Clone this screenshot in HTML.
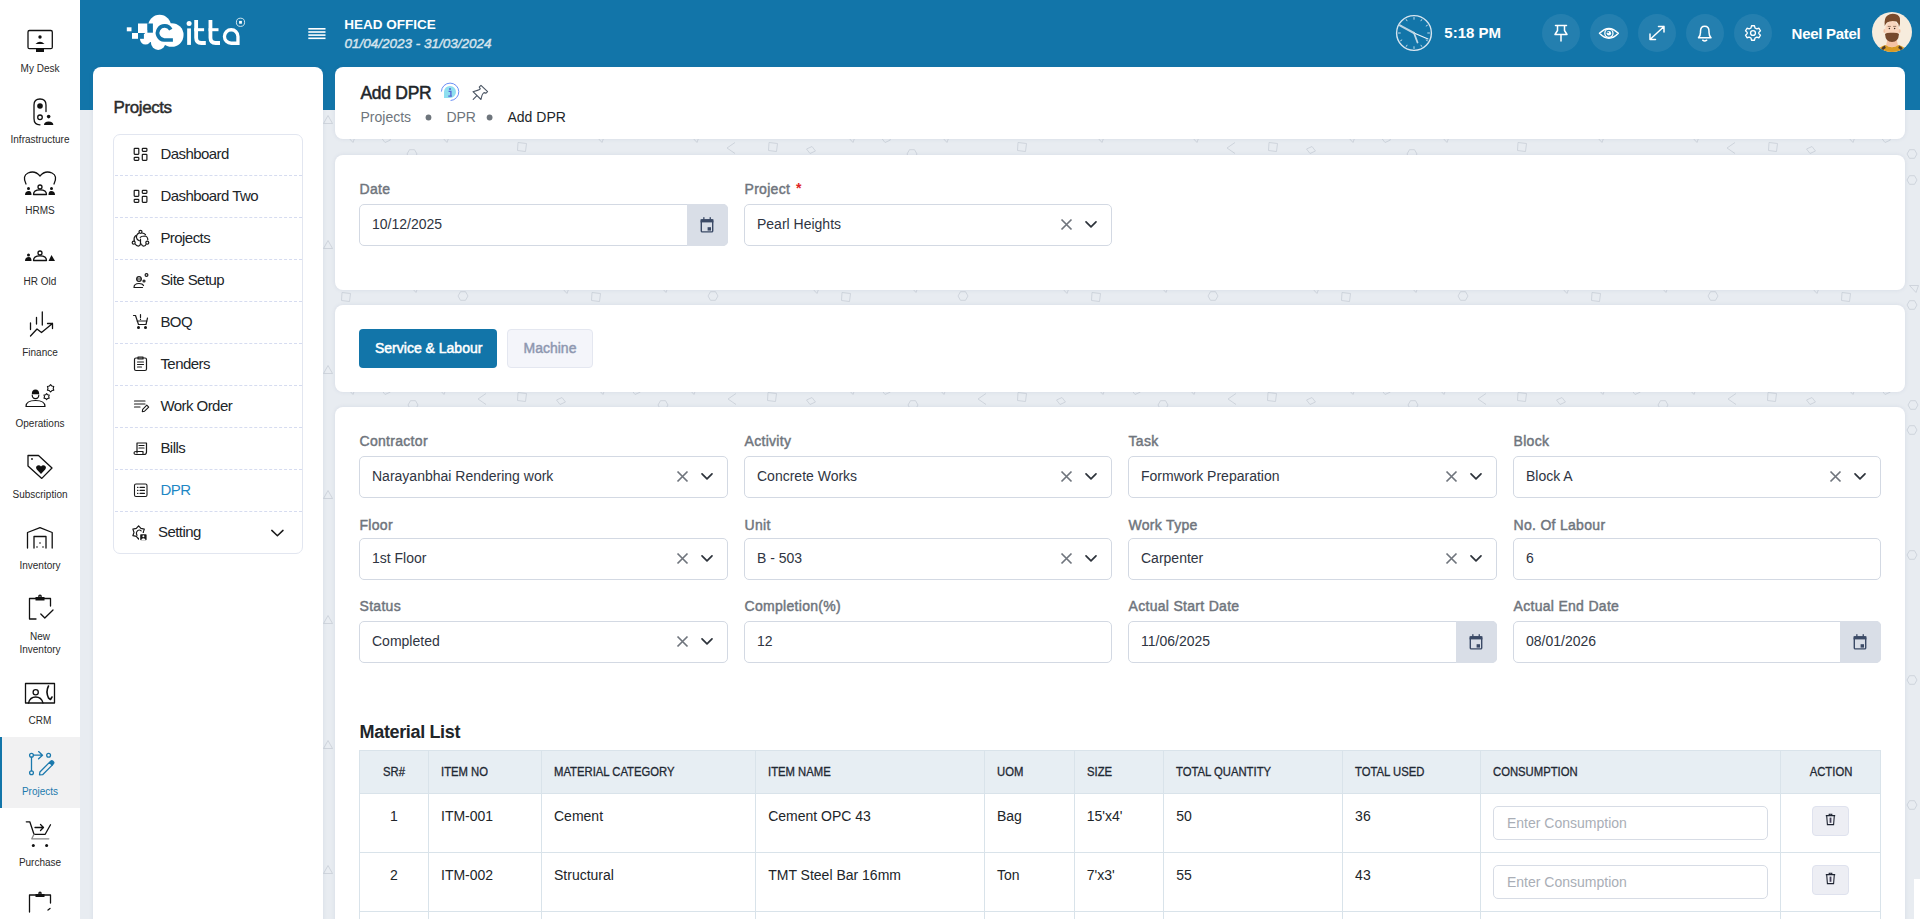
<!DOCTYPE html>
<html><head><meta charset="utf-8">
<style>
*{box-sizing:border-box;margin:0;padding:0}
html,body{width:1920px;height:919px;overflow:hidden}
body{font-family:"Liberation Sans",sans-serif;background:#e8ecf1;position:relative;color:#212529}
.abs{position:absolute}
.t{position:absolute;white-space:nowrap;line-height:1}
.card{position:absolute;background:#fff;border-radius:8px;box-shadow:0 0 4px rgba(60,80,130,0.10)}
svg{position:absolute;overflow:visible}
.inp{position:absolute;background:#fff;border:1px solid #d3d9e3;border-radius:5px}
.cal{position:absolute;background:#d9dee7;border-radius:0 5px 5px 0}
.hc{position:absolute;width:38px;height:38px;border-radius:50%;background:rgba(255,255,255,0.08)}
</style></head><body>
<div class="abs" style="left:0;top:0;width:80px;height:919px;background:#fff"></div>
<div class="abs" style="left:80px;top:0;width:1840px;height:110px;background:#1275a9"></div>
<div class="abs" style="left:0;top:737px;width:80px;height:71px;background:#f1f1f2"></div>
<div class="abs" style="left:0;top:737px;width:2px;height:71px;background:#1275a9"></div>
<svg style="left:0;top:0" width="80" height="919" fill="none" stroke="#111" stroke-width="1.3" stroke-linecap="round" stroke-linejoin="round">
<!-- my desk -->
<rect x="28" y="30.5" width="24.3" height="18.2" rx="1.5"/>
<rect x="36" y="49" width="8" height="3" fill="#111" stroke="none"/>
<circle cx="40" cy="37" r="1.7" fill="#111" stroke="none"/>
<path d="M35.5 44 Q40 39.5 44.5 44 Z" fill="#111" stroke="none"/>
<!-- infrastructure -->
<path d="M40 124.8 Q34 124.8 34 118.5 V105 Q34 99 40 99 Q46 99 46 105 V111.6"/>
<circle cx="40" cy="106" r="2.8" fill="#111" stroke="none"/>
<circle cx="40" cy="117.3" r="2.3"/>
<circle cx="48.65" cy="116.6" r="1.8" fill="#111" stroke="none"/>
<path d="M44 125 Q44 121.4 48.65 121.4 Q53.3 121.4 53.3 125 Z" fill="#111" stroke="none"/>
<!-- HRMS -->
<path d="M26 184 Q22 176 28 173 Q35 170 40 176 Q45 170 52 173 Q58 176 54 184"/>
<circle cx="40" cy="187" r="2"/>
<path d="M33.5 194.5 Q33.5 189.8 40 189.8 Q46.5 189.8 46.5 194.5 Z"/>
<circle cx="28.5" cy="188.5" r="1.5" fill="#111" stroke="none"/>
<path d="M25 195 Q25 191 29 191 Q31.5 191 31.5 195 Z" fill="#111" stroke="none"/>
<circle cx="51.5" cy="188.5" r="1.5" fill="#111" stroke="none"/>
<path d="M48.5 195 Q48.5 191 51 191 Q55 191 55 195 Z" fill="#111" stroke="none"/>
<!-- HR old -->
<circle cx="40" cy="253" r="2"/>
<path d="M33.5 260.5 Q33.5 255.8 40 255.8 Q46.5 255.8 46.5 260.5 Z"/>
<circle cx="28.5" cy="255" r="1.5" fill="#111" stroke="none"/>
<path d="M25 261 Q25 257 29 257 Q31.5 257 31.5 261 Z" fill="#111" stroke="none"/>
<path d="M48.5 261 L51.5 255 L55 261 Z" fill="#111" stroke="none"/>
<!-- finance -->
<path d="M30.5 323 V329.5 M36.5 317.5 V324 M42.3 312 V325"/>
<path d="M30.5 336 L37 329 L41.5 332.5 L52.5 323.5 M47.5 323.5 H52.5 V328.5"/>
<!-- operations -->
<path d="M26 406.5 Q26 400.5 35.5 400.5 Q45 400.5 45 406.5 Z" stroke-width="1.2"/>
<path d="M31.8 394.2 Q31.8 389.6 35.5 389.6 Q39.2 389.6 39.2 394.2 Z" fill="#111" stroke="none"/>
<path d="M32.2 395 Q32.2 398.6 35.5 398.6 Q38.8 398.6 38.8 395" stroke-width="1.1"/>
<path d="M50.60 384.60 L51.90 386.05 L53.80 386.45 L53.20 388.30 L53.80 390.15 L51.90 390.55 L50.60 392.00 L49.30 390.55 L47.40 390.15 L48.00 388.30 L47.40 386.45 L49.30 386.05 Z" stroke-width="1.1"/>
<path d="M46.60 393.60 L47.65 394.78 L49.20 395.10 L48.70 396.60 L49.20 398.10 L47.65 398.42 L46.60 399.60 L45.55 398.42 L44.00 398.10 L44.50 396.60 L44.00 395.10 L45.55 394.78 Z" stroke-width="1.1"/>
<!-- subscription -->
<path d="M28 455.5 H38.5 L52 468 L41.8 478.4 L28 466 Z"/>
<circle cx="32" cy="459" r="0.9" fill="#111" stroke="none"/>
<path d="M41 474 L36.8 469.5 Q35 467 37.5 465.5 Q39.5 464.5 41 466.5 Q42.5 464.5 44.5 465.5 Q47 467 45.2 469.5 Z" fill="#111" stroke="none"/>
<!-- inventory -->
<path d="M27.5 548 V532.5 L40 527.6 L52.2 532.5 V548 M34 548 V536.5 H46 V548"/>
<circle cx="40" cy="543" r="0.8" fill="#111" stroke="none"/>
<circle cx="37" cy="547" r="0.8" fill="#111" stroke="none"/>
<circle cx="43" cy="547" r="0.8" fill="#111" stroke="none"/>
<!-- new inventory -->
<path d="M36 598.5 H29.5 V619 H36 M44 598.5 H50.5 V606"/>
<rect x="35.5" y="597" width="9" height="3.5" fill="#111" stroke="none"/>
<circle cx="40" cy="596.3" r="1.2"/>
<path d="M40.8 614 L44.8 618 L53 610"/>
<!-- CRM -->
<path d="M25.5 703 V683.5 H54.5 V703 H25.5"/>
<circle cx="35.7" cy="692.3" r="2.6"/>
<path d="M28.5 703 Q30 697 35.7 697 Q41.4 697 43 703"/>
<path d="M48.5 686 Q45.5 691.5 48.5 698 L50.5 699.5 L52 697" stroke-width="1.6"/>
<!-- purchase -->
<path d="M26.3 821.8 H29.8 L34 834.3 H45.2 L50.5 824.8"/>
<path d="M34 834.3 L31.8 838.8 H48.8" stroke="#888"/>
<circle cx="33.3" cy="845.5" r="1.5" fill="#111" stroke="none"/>
<circle cx="46.6" cy="845.5" r="1.5" fill="#111" stroke="none"/>
<path d="M35 827.5 H43.5 M40.5 824.5 L43.5 827.5 L40.5 830.5"/>
<!-- next clipboard -->
<path d="M36 895 H29.5 V912 M44 895 H50.5 V903 M48 910 L50 908.5"/>
<rect x="35.5" y="894" width="9" height="3" fill="#111" stroke="none"/>
<circle cx="40" cy="893.3" r="1.1"/>
</svg>
<svg style="left:0;top:0" width="80" height="919" fill="none" stroke="#1b79ad" stroke-width="1.3" stroke-linecap="round" stroke-linejoin="round">
<circle cx="31.5" cy="755.2" r="1.9"/><circle cx="31.5" cy="772.7" r="1.9"/><circle cx="48.6" cy="755.2" r="1.9"/>
<path d="M31.5 757.1 V770.8 M33.4 755.2 H42.5 M38.6 751.6 L42.5 755.2 L38.6 758.8"/>
<path d="M39.5 774.8 L39.9 772 L49.5 762.4 L52.2 765.1 L42.6 774.7 Z"/>
<path d="M49.5 762.4 L51 761 Q51.8 760.3 52.6 761 L53.5 762 Q54.2 762.8 53.5 763.6 L52.2 765.1 Z" fill="#1b79ad"/>
</svg>
<div class="t" style="left:-60px;width:200px;text-align:center;top:63.53px;font-size:10px;color:#2a2a2a;">My Desk</div>
<div class="t" style="left:-60px;width:200px;text-align:center;top:134.53px;font-size:10px;color:#2a2a2a;">Infrastructure</div>
<div class="t" style="left:-60px;width:200px;text-align:center;top:205.53px;font-size:10px;color:#2a2a2a;">HRMS</div>
<div class="t" style="left:-60px;width:200px;text-align:center;top:276.54px;font-size:10px;color:#2a2a2a;">HR Old</div>
<div class="t" style="left:-60px;width:200px;text-align:center;top:347.54px;font-size:10px;color:#2a2a2a;">Finance</div>
<div class="t" style="left:-60px;width:200px;text-align:center;top:418.54px;font-size:10px;color:#2a2a2a;">Operations</div>
<div class="t" style="left:-60px;width:200px;text-align:center;top:489.54px;font-size:10px;color:#2a2a2a;">Subscription</div>
<div class="t" style="left:-60px;width:200px;text-align:center;top:560.53px;font-size:10px;color:#2a2a2a;">Inventory</div>
<div class="t" style="left:-60px;width:200px;text-align:center;top:631.53px;font-size:10px;color:#2a2a2a;">New</div>
<div class="t" style="left:-60px;width:200px;text-align:center;top:644.53px;font-size:10px;color:#2a2a2a;">Inventory</div>
<div class="t" style="left:-60px;width:200px;text-align:center;top:716.03px;font-size:10px;color:#2a2a2a;">CRM</div>
<div class="t" style="left:-60px;width:200px;text-align:center;top:858.03px;font-size:10px;color:#2a2a2a;">Purchase</div>
<div class="t" style="left:-60px;width:200px;text-align:center;top:787.33px;font-size:10px;color:#1b79ad;">Projects</div>
<svg style="left:0;top:0" width="1920" height="919" fill="none" stroke="#c8ced7" stroke-width="0.8"><path d="M346.5 135.5 L355.5 135.5 L353 142.5 Z"/><path d="M381.5 138 L387 135.5 L390.5 140 L385 142.5 Z"/><path d="M407 154 L409.5 149.7 H414.5 L417 154 L414.5 158.3 H409.5 Z"/><path d="M440.5 135.5 L449.5 135.5 L447 142.5 Z"/><path d="M518 142.5 L526.5 143.5 L525.5 151.5 L517.5 150.5 Z"/><path d="M595.5 135.5 L604.5 135.5 L602 142.5 Z"/><path d="M690.5 135.5 L699.5 135.5 L697 142.5 Z"/><path d="M735 142.5 L727 148 L735 153.5"/><path d="M769 142.5 L777.5 143.5 L776.5 151.5 L768.5 150.5 Z"/><path d="M806.5 149 L812 146.5 L815.5 151 L810 153.5 Z"/><path d="M846.5 135.5 L855.5 135.5 L853 142.5 Z"/><path d="M881.5 138 L887 135.5 L890.5 140 L885 142.5 Z"/><path d="M907 154 L909.5 149.7 H914.5 L917 154 L914.5 158.3 H909.5 Z"/><path d="M940.5 135.5 L949.5 135.5 L947 142.5 Z"/><path d="M1018 142.5 L1026.5 143.5 L1025.5 151.5 L1017.5 150.5 Z"/><path d="M1095.5 135.5 L1104.5 135.5 L1102 142.5 Z"/><path d="M1190.5 135.5 L1199.5 135.5 L1197 142.5 Z"/><path d="M1235 142.5 L1227 148 L1235 153.5"/><path d="M1269 142.5 L1277.5 143.5 L1276.5 151.5 L1268.5 150.5 Z"/><path d="M1306.5 149 L1312 146.5 L1315.5 151 L1310 153.5 Z"/><path d="M1346.5 135.5 L1355.5 135.5 L1353 142.5 Z"/><path d="M1381.5 138 L1387 135.5 L1390.5 140 L1385 142.5 Z"/><path d="M1407 154 L1409.5 149.7 H1414.5 L1417 154 L1414.5 158.3 H1409.5 Z"/><path d="M1440.5 135.5 L1449.5 135.5 L1447 142.5 Z"/><path d="M1518 142.5 L1526.5 143.5 L1525.5 151.5 L1517.5 150.5 Z"/><path d="M1595.5 135.5 L1604.5 135.5 L1602 142.5 Z"/><path d="M1690.5 135.5 L1699.5 135.5 L1697 142.5 Z"/><path d="M1735 142.5 L1727 148 L1735 153.5"/><path d="M1769 142.5 L1777.5 143.5 L1776.5 151.5 L1768.5 150.5 Z"/><path d="M1806.5 149 L1812 146.5 L1815.5 151 L1810 153.5 Z"/><path d="M1846.5 135.5 L1855.5 135.5 L1853 142.5 Z"/><path d="M1881.5 138 L1887 135.5 L1890.5 140 L1885 142.5 Z"/><path d="M1907 154 L1909.5 149.7 H1914.5 L1917 154 L1914.5 158.3 H1909.5 Z"/><path d="M1940.5 135.5 L1949.5 135.5 L1947 142.5 Z"/><path d="M2018 142.5 L2026.5 143.5 L2025.5 151.5 L2017.5 150.5 Z"/><path d="M2095.5 135.5 L2104.5 135.5 L2102 142.5 Z"/><path d="M2190.5 135.5 L2199.5 135.5 L2197 142.5 Z"/><path d="M2235 142.5 L2227 148 L2235 153.5"/><path d="M2269 142.5 L2277.5 143.5 L2276.5 151.5 L2268.5 150.5 Z"/><path d="M2306.5 149 L2312 146.5 L2315.5 151 L2310 153.5 Z"/><path d="M342 292.5 L350.5 293.5 L349.5 301.5 L341.5 300.5 Z"/><path d="M409.5 285.5 L418.5 285.5 L416 292.5 Z"/><path d="M458 296 L460.5 291.7 H465.5 L468 296 L465.5 300.3 H460.5 Z"/><path d="M560.5 286.5 L569.5 286.5 L567 293.5 Z"/><path d="M592 292.5 L600.5 293.5 L599.5 301.5 L591.5 300.5 Z"/><path d="M659.5 285.5 L668.5 285.5 L666 292.5 Z"/><path d="M708 296 L710.5 291.7 H715.5 L718 296 L715.5 300.3 H710.5 Z"/><path d="M810.5 286.5 L819.5 286.5 L817 293.5 Z"/><path d="M842 292.5 L850.5 293.5 L849.5 301.5 L841.5 300.5 Z"/><path d="M909.5 285.5 L918.5 285.5 L916 292.5 Z"/><path d="M958 296 L960.5 291.7 H965.5 L968 296 L965.5 300.3 H960.5 Z"/><path d="M1060.5 286.5 L1069.5 286.5 L1067 293.5 Z"/><path d="M1092 292.5 L1100.5 293.5 L1099.5 301.5 L1091.5 300.5 Z"/><path d="M1159.5 285.5 L1168.5 285.5 L1166 292.5 Z"/><path d="M1208 296 L1210.5 291.7 H1215.5 L1218 296 L1215.5 300.3 H1210.5 Z"/><path d="M1310.5 286.5 L1319.5 286.5 L1317 293.5 Z"/><path d="M1342 292.5 L1350.5 293.5 L1349.5 301.5 L1341.5 300.5 Z"/><path d="M1409.5 285.5 L1418.5 285.5 L1416 292.5 Z"/><path d="M1458 296 L1460.5 291.7 H1465.5 L1468 296 L1465.5 300.3 H1460.5 Z"/><path d="M1560.5 286.5 L1569.5 286.5 L1567 293.5 Z"/><path d="M1592 292.5 L1600.5 293.5 L1599.5 301.5 L1591.5 300.5 Z"/><path d="M1659.5 285.5 L1668.5 285.5 L1666 292.5 Z"/><path d="M1708 296 L1710.5 291.7 H1715.5 L1718 296 L1715.5 300.3 H1710.5 Z"/><path d="M1810.5 286.5 L1819.5 286.5 L1817 293.5 Z"/><path d="M1842 292.5 L1850.5 293.5 L1849.5 301.5 L1841.5 300.5 Z"/><path d="M1909.5 285.5 L1918.5 285.5 L1916 292.5 Z"/><path d="M1958 296 L1960.5 291.7 H1965.5 L1968 296 L1965.5 300.3 H1960.5 Z"/><path d="M2060.5 286.5 L2069.5 286.5 L2067 293.5 Z"/><path d="M346.5 387.5 L355.5 387.5 L353 394.5 Z"/><path d="M381.5 390 L387 387.5 L390.5 392 L385 394.5 Z"/><path d="M408 405 L410.5 400.7 H415.5 L418 405 L415.5 409.3 H410.5 Z"/><path d="M437.5 387.5 L446.5 387.5 L444 394.5 Z"/><path d="M486 393.5 L478 399 L486 404.5"/><path d="M518 392.5 L526.5 393.5 L525.5 401.5 L517.5 400.5 Z"/><path d="M556.5 400 L562 397.5 L565.5 402 L560 404.5 Z"/><path d="M596.5 387.5 L605.5 387.5 L603 394.5 Z"/><path d="M631.5 390 L637 387.5 L640.5 392 L635 394.5 Z"/><path d="M658 405 L660.5 400.7 H665.5 L668 405 L665.5 409.3 H660.5 Z"/><path d="M687.5 387.5 L696.5 387.5 L694 394.5 Z"/><path d="M736 393.5 L728 399 L736 404.5"/><path d="M768 392.5 L776.5 393.5 L775.5 401.5 L767.5 400.5 Z"/><path d="M806.5 400 L812 397.5 L815.5 402 L810 404.5 Z"/><path d="M846.5 387.5 L855.5 387.5 L853 394.5 Z"/><path d="M881.5 390 L887 387.5 L890.5 392 L885 394.5 Z"/><path d="M908 405 L910.5 400.7 H915.5 L918 405 L915.5 409.3 H910.5 Z"/><path d="M937.5 387.5 L946.5 387.5 L944 394.5 Z"/><path d="M986 393.5 L978 399 L986 404.5"/><path d="M1018 392.5 L1026.5 393.5 L1025.5 401.5 L1017.5 400.5 Z"/><path d="M1056.5 400 L1062 397.5 L1065.5 402 L1060 404.5 Z"/><path d="M1096.5 387.5 L1105.5 387.5 L1103 394.5 Z"/><path d="M1131.5 390 L1137 387.5 L1140.5 392 L1135 394.5 Z"/><path d="M1158 405 L1160.5 400.7 H1165.5 L1168 405 L1165.5 409.3 H1160.5 Z"/><path d="M1187.5 387.5 L1196.5 387.5 L1194 394.5 Z"/><path d="M1236 393.5 L1228 399 L1236 404.5"/><path d="M1268 392.5 L1276.5 393.5 L1275.5 401.5 L1267.5 400.5 Z"/><path d="M1306.5 400 L1312 397.5 L1315.5 402 L1310 404.5 Z"/><path d="M1346.5 387.5 L1355.5 387.5 L1353 394.5 Z"/><path d="M1381.5 390 L1387 387.5 L1390.5 392 L1385 394.5 Z"/><path d="M1408 405 L1410.5 400.7 H1415.5 L1418 405 L1415.5 409.3 H1410.5 Z"/><path d="M1437.5 387.5 L1446.5 387.5 L1444 394.5 Z"/><path d="M1486 393.5 L1478 399 L1486 404.5"/><path d="M1518 392.5 L1526.5 393.5 L1525.5 401.5 L1517.5 400.5 Z"/><path d="M1556.5 400 L1562 397.5 L1565.5 402 L1560 404.5 Z"/><path d="M1596.5 387.5 L1605.5 387.5 L1603 394.5 Z"/><path d="M1631.5 390 L1637 387.5 L1640.5 392 L1635 394.5 Z"/><path d="M1658 405 L1660.5 400.7 H1665.5 L1668 405 L1665.5 409.3 H1660.5 Z"/><path d="M1687.5 387.5 L1696.5 387.5 L1694 394.5 Z"/><path d="M1736 393.5 L1728 399 L1736 404.5"/><path d="M1768 392.5 L1776.5 393.5 L1775.5 401.5 L1767.5 400.5 Z"/><path d="M1806.5 400 L1812 397.5 L1815.5 402 L1810 404.5 Z"/><path d="M1846.5 387.5 L1855.5 387.5 L1853 394.5 Z"/><path d="M1881.5 390 L1887 387.5 L1890.5 392 L1885 394.5 Z"/><path d="M1908 405 L1910.5 400.7 H1915.5 L1918 405 L1915.5 409.3 H1910.5 Z"/><path d="M1937.5 387.5 L1946.5 387.5 L1944 394.5 Z"/><path d="M1986 393.5 L1978 399 L1986 404.5"/><path d="M2018 392.5 L2026.5 393.5 L2025.5 401.5 L2017.5 400.5 Z"/><path d="M2056.5 400 L2062 397.5 L2065.5 402 L2060 404.5 Z"/><path d="M323.5 123.5 L328 115.5 L332.5 123.5 Z"/><path d="M1907 180 L1909.5 175.7 H1914.5 L1917 180 L1914.5 184.3 H1909.5 Z"/><path d="M323.5 248.5 L328 240.5 L332.5 248.5 Z"/><path d="M1907 305 L1909.5 300.7 H1914.5 L1917 305 L1914.5 309.3 H1909.5 Z"/><path d="M323.5 373.5 L328 365.5 L332.5 373.5 Z"/><path d="M1907 430 L1909.5 425.7 H1914.5 L1917 430 L1914.5 434.3 H1909.5 Z"/><path d="M323.5 498.5 L328 490.5 L332.5 498.5 Z"/><path d="M1907 555 L1909.5 550.7 H1914.5 L1917 555 L1914.5 559.3 H1909.5 Z"/><path d="M323.5 623.5 L328 615.5 L332.5 623.5 Z"/><path d="M1907 680 L1909.5 675.7 H1914.5 L1917 680 L1914.5 684.3 H1909.5 Z"/><path d="M323.5 748.5 L328 740.5 L332.5 748.5 Z"/><path d="M1907 805 L1909.5 800.7 H1914.5 L1917 805 L1914.5 809.3 H1909.5 Z"/><path d="M323.5 873.5 L328 865.5 L332.5 873.5 Z"/><path d="M1907 930 L1909.5 925.7 H1914.5 L1917 930 L1914.5 934.3 H1909.5 Z"/></svg>
<div class="card" style="left:93px;top:67px;width:230px;height:900px"></div>
<div class="card" style="left:335px;top:67px;width:1570px;height:72px"></div>
<div class="card" style="left:335px;top:155px;width:1570px;height:135px"></div>
<div class="card" style="left:335px;top:305px;width:1570px;height:87px"></div>
<div class="card" style="left:335px;top:407px;width:1570px;height:600px"></div>
<svg style="left:0;top:0" width="1920" height="110">
<g fill="#fff">
<rect x="126.8" y="27.3" width="4.7" height="4"/>
<rect x="132" y="33" width="6" height="5.8"/>
<rect x="138" y="23.5" width="9.6" height="9.5"/>
<circle cx="159.6" cy="26.3" r="11.5"/>
<circle cx="171.7" cy="35" r="11.85"/>
<circle cx="158.2" cy="42.6" r="7.3"/>
<circle cx="145.5" cy="39" r="5.5"/>
<rect x="145" y="30" width="20" height="12"/>
</g>
<g fill="#1275a9">
<rect x="147.4" y="23.5" width="5.5" height="9.2"/>
<rect x="138" y="33" width="5.9" height="5.8"/>
</g>
<path d="M170.8 29.6 A7.05 7.05 0 1 0 164.2 40 H172.9" fill="none" stroke="#1275a9" stroke-width="3.7"/>
<g fill="none" stroke="#fff">
<circle cx="189.1" cy="23.4" r="2.5" fill="#fff" stroke="none"/>
<path d="M189.05 28.4 V44.9" stroke-width="3.8"/>
<path d="M196.15 19.9 V37.8 Q196.15 43 201.3 43 H205.8" stroke-width="3.8"/>
<path d="M194.3 29.7 H204.1" stroke-width="3"/>
<path d="M210.45 19.9 V37.8 Q210.45 43 215.6 43 H220" stroke-width="3.8"/>
<path d="M208.6 29.7 H218.5" stroke-width="3"/>
<path d="M231.2 43.25 A6.75 6.75 0 1 1 237.95 36.5 V43.25 Z" stroke-width="3.3"/>
<circle cx="240.5" cy="22.3" r="4.1" stroke-width="0.8"/>
<rect x="239.1" y="20.9" width="2.8" height="2.8" fill="#fff" stroke="none"/>
</g>
<g fill="#fff">
<rect x="308.3" y="28" width="17.2" height="1.6"/>
<rect x="308.3" y="31.2" width="17.2" height="1.6"/>
<rect x="308.3" y="34.3" width="17.2" height="1.6"/>
<rect x="308.3" y="37.5" width="17.2" height="1.6"/>
</g>
<g fill="none" stroke="#d5e4ef" stroke-linecap="round">
<circle cx="1414" cy="33" r="17.4" stroke-width="1.4"/>
<path d="M1414 17.5 V19.3 M1414 46.7 V48.5 M1398.5 33 H1400.3 M1427.7 33 H1429.5 M1421.7 19.6 L1421 20.8 M1427.4 25.3 L1426.2 26 M1427.4 40.7 L1426.2 40 M1421.7 46.4 L1421 45.2 M1406.3 46.4 L1407 45.2 M1400.6 40.7 L1401.8 40 M1400.6 25.3 L1401.8 26 M1406.3 19.6 L1407 20.8" stroke-width="0.9"/>
<path d="M1414 33 L1399.8 25.3" stroke-width="2" stroke="#b9d3e3"/>
<path d="M1414 33 L1428 38.9" stroke-width="1.1" stroke="#eef5f9"/>
<path d="M1414 33 L1417.5 42.5" stroke-width="1.8" stroke="#c0d8e7"/>
</g>
</svg>
<div class="t" style="left:344.3px;top:18.17px;font-size:13.5px;font-weight:bold;color:#fff;">HEAD OFFICE</div>
<div class="t" style="left:344.5px;top:36.87px;font-size:13.5px;color:#d6e4ed;font-style:italic;-webkit-text-stroke:0.45px #d6e4ed;">01/04/2023 - 31/03/2024</div>
<div class="t" style="left:1444.3px;top:25.20px;font-size:15px;font-weight:bold;color:#fff;">5:18 PM</div>
<div class="t" style="left:1791.6px;top:26.30px;font-size:15px;font-weight:bold;color:#fff;letter-spacing:-0.3px;">Neel Patel</div>
<div class="hc" style="left:1542px;top:14px"></div>
<div class="hc" style="left:1590px;top:14px"></div>
<div class="hc" style="left:1638px;top:14px"></div>
<div class="hc" style="left:1686px;top:14px"></div>
<div class="hc" style="left:1734px;top:14px"></div>
<svg style="left:0;top:0" width="1920" height="110" fill="none" stroke="#fff" stroke-width="1.5" stroke-linecap="round" stroke-linejoin="round">
<path d="M1555.5 25.5 H1566.5 M1557.5 25.5 V30.5 L1555 34.5 H1567 L1564.5 30.5 V25.5 M1561 34.5 V41"/>
<path d="M1599.5 33.3 Q1608.9 23.5 1618.3 33.3 Q1608.9 43.2 1599.5 33.3 Z"/>
<circle cx="1608.9" cy="33.3" r="4.1" stroke-width="1.3"/>
<circle cx="1608.9" cy="33.3" r="2.2" fill="#fff" stroke="none"/>
<circle cx="1608.1" cy="32.5" r="0.8" fill="#1275a9" stroke="none"/>
<path d="M1650 39.5 L1664 26.5 M1658.5 26.5 H1664 V32 M1650 34 V39.5 H1655.5"/>
<path d="M1698.5 37.8 H1711 Q1709 35.5 1709 32.5 V31.3 Q1709 26.3 1704.7 26.3 Q1700.5 26.3 1700.5 31.3 V32.5 Q1700.5 35.5 1698.5 37.8 Z M1702.7 40.2 Q1704.7 41.8 1706.7 40.2"/>
<g transform="translate(1753 33) scale(0.88) translate(-1753 -33)"><circle cx="1753" cy="33" r="2.8"/>
<path d="M1751.3 24.8 H1754.7 L1755.3 27.3 L1757.3 28.4 L1759.8 27.6 L1761.5 30.5 L1759.6 32.3 V33.7 L1761.5 35.5 L1759.8 38.4 L1757.3 37.6 L1755.3 38.7 L1754.7 41.2 H1751.3 L1750.7 38.7 L1748.7 37.6 L1746.2 38.4 L1744.5 35.5 L1746.4 33.7 V32.3 L1744.5 30.5 L1746.2 27.6 L1748.7 28.4 L1750.7 27.3 Z"/></g>
</svg>
<svg style="left:1872px;top:12px" width="40" height="40" viewBox="0 0 40 40">
<defs><clipPath id="av"><circle cx="20" cy="20" r="20"/></clipPath></defs>
<g clip-path="url(#av)">
<rect width="40" height="40" fill="#f7ecdd"/>
<path d="M14 33.5 Q20 36.5 26 33.5 L24.5 27 H15.5 Z" fill="#f4c2a5"/>
<path d="M5 40 Q7 34.5 13.5 33 Q20 37.5 26.5 33 Q33 34.5 35 40 Z" fill="#d89a25"/>
<path d="M8.5 38.5 Q10 34.5 12.8 33.4 L13.8 36 Q11 37 10.5 40 Z M31.5 38.5 Q30 34.5 27.2 33.4 L26.2 36 Q29 37 29.5 40 Z" fill="#4a3a2e"/>
<ellipse cx="12.6" cy="19" rx="1.2" ry="2" fill="#f2c3a6"/><ellipse cx="27.4" cy="19" rx="1.2" ry="2" fill="#f2c3a6"/>
<ellipse cx="20" cy="18" rx="6.8" ry="9.3" fill="#f9d5bd"/>
<path d="M13 22 Q13.5 30 20 30 Q26.5 30 27 22 Q25.5 20.5 20 20.8 Q14.5 20.5 13 22 Z" fill="#76492d"/>
<path d="M12.7 14 Q11.8 6 15.5 3.5 Q18.5 1 23 2 Q28.5 3 28 8.5 Q28.5 12 27 15 Q26.5 11 24.5 9.5 Q19 8 15 10.5 Q13.5 12 12.7 14 Z" fill="#7a4b2c"/>
<path d="M15.8 14.4 H18.8 M21.2 14.4 H24.2" stroke="#6b4a35" stroke-width="0.7"/>
<circle cx="17.4" cy="16.4" r="0.75" fill="#3a2a20"/><circle cx="22.6" cy="16.4" r="0.75" fill="#3a2a20"/>
</g></svg>
<div class="t" style="left:113.5px;top:98.91px;font-size:17px;color:#2b2b2b;letter-spacing:-0.4px;-webkit-text-stroke:0.45px #2b2b2b;">Projects</div>
<div class="abs" style="left:113px;top:133.5px;width:190px;height:420px;border:1px solid #e2e6f0;border-radius:7px"></div>
<div class="t" style="left:160.4px;top:146.20px;font-size:15px;color:#212529;letter-spacing:-0.55px;">Dashboard</div>
<div class="abs" style="left:114.5px;top:175.0px;width:187px;height:0;border-top:1px dashed #d6dcf0"></div>
<div class="t" style="left:160.4px;top:188.20px;font-size:15px;color:#212529;letter-spacing:-0.55px;">Dashboard Two</div>
<div class="abs" style="left:114.5px;top:217.0px;width:187px;height:0;border-top:1px dashed #d6dcf0"></div>
<div class="t" style="left:160.4px;top:230.20px;font-size:15px;color:#212529;letter-spacing:-0.55px;">Projects</div>
<div class="abs" style="left:114.5px;top:259.0px;width:187px;height:0;border-top:1px dashed #d6dcf0"></div>
<div class="t" style="left:160.4px;top:272.20px;font-size:15px;color:#212529;letter-spacing:-0.55px;">Site Setup</div>
<div class="abs" style="left:114.5px;top:301.0px;width:187px;height:0;border-top:1px dashed #d6dcf0"></div>
<div class="t" style="left:160.4px;top:314.20px;font-size:15px;color:#212529;letter-spacing:-0.55px;">BOQ</div>
<div class="abs" style="left:114.5px;top:343.0px;width:187px;height:0;border-top:1px dashed #d6dcf0"></div>
<div class="t" style="left:160.4px;top:356.20px;font-size:15px;color:#212529;letter-spacing:-0.55px;">Tenders</div>
<div class="abs" style="left:114.5px;top:385.0px;width:187px;height:0;border-top:1px dashed #d6dcf0"></div>
<div class="t" style="left:160.4px;top:398.20px;font-size:15px;color:#212529;letter-spacing:-0.55px;">Work Order</div>
<div class="abs" style="left:114.5px;top:427.0px;width:187px;height:0;border-top:1px dashed #d6dcf0"></div>
<div class="t" style="left:160.4px;top:440.20px;font-size:15px;color:#212529;letter-spacing:-0.55px;">Bills</div>
<div class="abs" style="left:114.5px;top:469.0px;width:187px;height:0;border-top:1px dashed #d6dcf0"></div>
<div class="t" style="left:160.4px;top:482.20px;font-size:15px;color:#1e87c5;letter-spacing:-0.55px;">DPR</div>
<div class="abs" style="left:114.5px;top:511.0px;width:187px;height:0;border-top:1px dashed #d6dcf0"></div>
<div class="t" style="left:158px;top:524.20px;font-size:15px;color:#212529;letter-spacing:-0.55px;">Setting</div>
<svg style="left:0;top:0" width="330" height="600" fill="none" stroke="#1a1a1a" stroke-width="1.2" stroke-linecap="round" stroke-linejoin="round">
<g id="dash">
<rect x="134.2" y="148.3" width="4.6" height="6" rx="0.7"/><rect x="134.2" y="157.3" width="4.6" height="3" rx="0.7"/>
<rect x="142.3" y="148.3" width="4.6" height="3" rx="0.7"/><rect x="142.3" y="154.3" width="4.6" height="6" rx="0.7"/>
</g>
<use href="#dash" y="42"/>
<!-- projects -->
<circle cx="140.5" cy="231.8" r="1.5"/><circle cx="133.7" cy="242.7" r="1.5"/><circle cx="147.3" cy="242.7" r="1.5"/>
<path d="M139 233 Q136.3 234.2 136.4 237.3 Q136.7 239.6 139.3 240.8 M142 233 Q144.3 233.2 145.5 234.6 M134.3 241.1 Q133.4 237.4 135.6 235.6 M135.4 244.3 Q136.3 246.1 138.3 246.1 Q140.4 246 140.5 243.3 V239.2 M140.2 237.3 Q141.3 236 144.6 236 Q147.6 236.2 147.8 239.6 M146 244.4 Q145.6 246.1 143.7 246.1 Q141.8 246 141.6 244.2"/>
<!-- site setup -->
<circle cx="139" cy="279" r="2.3"/>
<path d="M136.7 279 H141.3" />
<path d="M134 287.5 Q134 283.5 139 283.5 Q142.5 283.5 143.5 285.5 M134 287.5 H142.5"/>
<circle cx="146.5" cy="275" r="1.4"/><circle cx="144" cy="281" r="1"/>
<!-- boq -->
<path d="M133.5 315.5 H135.5 L138.5 324.5 H146 L147.5 318 M137 321 H147 M140.5 314.5 V317.5 M140.5 319 V319.5"/>
<circle cx="138.5" cy="327.5" r="0.9" fill="#1a1a1a"/><circle cx="145.5" cy="327.5" r="0.9" fill="#1a1a1a"/>
<!-- tenders -->
<rect x="134.5" y="358" width="12" height="12.5" rx="1.5"/>
<path d="M138 357 H143 V359 H138 Z M137.5 362 H143.5 M137.5 364.5 H143.5 M137.5 367 H141.5"/>
<!-- work order -->
<path d="M134.5 401 H145 M134.5 404 H145 M134.5 407 H140"/>
<path d="M142.3 411.7 L142.7 409.3 L146.8 405.2 L148.7 407.1 L144.6 411.2 Z" stroke-width="1.1"/>
<!-- bills -->
<path d="M137 453 V443 H146.5 V452 Q146.5 454.5 144 454.5 H136 Q134 454.5 134 453 Q134 451.5 136 451.5 H143 V453.5 M139 445.5 H144 M139 448 H144"/>
<!-- dpr -->
<rect x="134.5" y="484" width="12.5" height="12.5" rx="1.5" stroke-width="1.1"/>
<path d="M137.5 487.3 H138 M140 487.3 H144.5 M137.5 490.3 H138 M140 490.3 H144.5 M137.5 493.3 H138 M140 493.3 H144.5"/>
<!-- setting gear -->
<path d="M138.60 525.80 L140.90 528.42 L144.32 529.10 L143.20 532.40 L144.32 535.70 L140.90 536.38 L138.60 539.00 L136.30 536.38 L132.88 535.70 L134.00 532.40 L132.88 529.10 L136.30 528.42 Z" stroke-width="1.2"/>
<path d="M137 535.5 Q135.5 532.5 137.6 530.6 Q139.6 529.2 141.2 530.8" stroke-width="1.1"/>
<rect x="139" y="533" width="8.6" height="8.3" fill="#fff" stroke="none"/>
<rect x="140.2" y="534.2" width="6.4" height="6" rx="0.8" fill="#1a1a1a" stroke="none"/>
<circle cx="143.4" cy="536.3" r="1" fill="#fff" stroke="none"/>
<path d="M141.2 540.2 Q141.5 538.2 143.4 538.2 Q145.3 538.2 145.6 540.2 Z" fill="#fff" stroke="none"/>
<path d="M271.8 530.4 L277.4 535.8 L283 530.4" stroke-width="1.5"/>
</svg>
<div class="t" style="left:360.5px;top:85.09px;font-size:17.5px;color:#212529;letter-spacing:-0.3px;-webkit-text-stroke:0.5px #212529;">Add DPR</div>
<svg style="left:0;top:0" width="600" height="140">
<path d="M444 97.9 V91.8 A6 6 0 1 1 450 97.9 Z" fill="#8fdff0"/>
<path d="M441.4 91.6 A8.7 8.7 0 1 1 450.6 100.5" fill="none" stroke="#6b8ff5" stroke-width="1"/>
<circle cx="450" cy="89" r="1" fill="#5563d3"/>
<path d="M448.6 91.3 H450.9 V95.8 M448.3 96.1 H451.9" fill="none" stroke="#5563d3" stroke-width="1.3"/>
<path d="M473 91.7 L477.4 90.4 Q479.3 89.8 480.3 88.9 Q479.6 87.8 479.2 87.1 L481 85.3 L487.6 91.7 L485.8 93.3 Q485 92.6 484 92.6 Q482.7 93.6 482.1 95.1 Q481.3 97.6 481 99.5 Z M476.9 95.6 L473.2 99.4" fill="none" stroke="#4b5563" stroke-width="1.1" stroke-linejoin="round" stroke-linecap="round"/>
<circle cx="428.5" cy="117.5" r="2.9" fill="#6e757c"/>
<circle cx="489.6" cy="117.5" r="2.9" fill="#6e757c"/>
</svg>
<div class="t" style="left:360.5px;top:109.65px;font-size:14px;color:#6e757c;">Projects</div>
<div class="t" style="left:446.4px;top:109.65px;font-size:14px;color:#6e757c;">DPR</div>
<div class="t" style="left:507.5px;top:109.65px;font-size:14px;color:#212529;">Add DPR</div>
<div class="t" style="left:359.5px;top:181.85px;font-size:14px;color:#6f757d;letter-spacing:0.3px;-webkit-text-stroke:0.45px #6f757d;">Date</div>
<div class="inp" style="left:359px;top:204px;width:369px;height:42px"></div>
<div class="cal" style="left:687px;top:204px;width:41px;height:42px"></div>
<div class="t" style="left:372px;top:217.45px;font-size:14px;color:#2f3542;">10/12/2025</div>
<div class="t" style="left:744.5px;top:181.85px;font-size:14px;color:#6f757d;letter-spacing:0.3px;-webkit-text-stroke:0.45px #6f757d;">Project</div>
<div class="inp" style="left:744px;top:204px;width:368px;height:42px"></div>
<div class="t" style="left:757px;top:217.45px;font-size:14px;color:#2f3542;">Pearl Heights</div>
<div class="t" style="left:796px;top:181px;font-size:14px;color:#e02424;font-weight:bold;line-height:1">*</div>
<div class="abs" style="left:359px;top:329px;width:138px;height:39px;background:#1275a9;border-radius:4px"></div>
<div class="t" style="left:375px;top:341.25px;font-size:14px;color:#fff;-webkit-text-stroke:0.5px #fff;">Service &amp; Labour</div>
<div class="abs" style="left:507px;top:329px;width:86px;height:39px;background:#f4f5fa;border:1px solid #e4e7f0;border-radius:4px"></div>
<div class="t" style="left:523.5px;top:341.25px;font-size:14px;color:#8e97b0;-webkit-text-stroke:0.45px #8e97b0;">Machine</div>
<div class="t" style="left:359.5px;top:433.95px;font-size:14px;color:#6f757d;letter-spacing:0.3px;-webkit-text-stroke:0.45px #6f757d;">Contractor</div>
<div class="inp" style="left:359px;top:456px;width:369px;height:42px"></div>
<div class="t" style="left:372px;top:469.45px;font-size:14px;color:#2f3542;">Narayanbhai Rendering work</div>
<div class="t" style="left:744.5px;top:433.95px;font-size:14px;color:#6f757d;letter-spacing:0.3px;-webkit-text-stroke:0.45px #6f757d;">Activity</div>
<div class="inp" style="left:744px;top:456px;width:368px;height:42px"></div>
<div class="t" style="left:757px;top:469.45px;font-size:14px;color:#2f3542;">Concrete Works</div>
<div class="t" style="left:1128.5px;top:433.95px;font-size:14px;color:#6f757d;letter-spacing:0.3px;-webkit-text-stroke:0.45px #6f757d;">Task</div>
<div class="inp" style="left:1128px;top:456px;width:369px;height:42px"></div>
<div class="t" style="left:1141px;top:469.45px;font-size:14px;color:#2f3542;">Formwork Preparation</div>
<div class="t" style="left:1513.5px;top:433.95px;font-size:14px;color:#6f757d;letter-spacing:0.3px;-webkit-text-stroke:0.45px #6f757d;">Block</div>
<div class="inp" style="left:1513px;top:456px;width:368px;height:42px"></div>
<div class="t" style="left:1526px;top:469.45px;font-size:14px;color:#2f3542;">Block A</div>
<div class="t" style="left:359.5px;top:517.55px;font-size:14px;color:#6f757d;letter-spacing:0.3px;-webkit-text-stroke:0.45px #6f757d;">Floor</div>
<div class="inp" style="left:359px;top:538px;width:369px;height:42px"></div>
<div class="t" style="left:372px;top:551.45px;font-size:14px;color:#2f3542;">1st Floor</div>
<div class="t" style="left:744.5px;top:517.55px;font-size:14px;color:#6f757d;letter-spacing:0.3px;-webkit-text-stroke:0.45px #6f757d;">Unit</div>
<div class="inp" style="left:744px;top:538px;width:368px;height:42px"></div>
<div class="t" style="left:757px;top:551.45px;font-size:14px;color:#2f3542;">B - 503</div>
<div class="t" style="left:1128.5px;top:517.55px;font-size:14px;color:#6f757d;letter-spacing:0.3px;-webkit-text-stroke:0.45px #6f757d;">Work Type</div>
<div class="inp" style="left:1128px;top:538px;width:369px;height:42px"></div>
<div class="t" style="left:1141px;top:551.45px;font-size:14px;color:#2f3542;">Carpenter</div>
<div class="t" style="left:1513.5px;top:517.55px;font-size:14px;color:#6f757d;letter-spacing:0.3px;-webkit-text-stroke:0.45px #6f757d;">No. Of Labour</div>
<div class="inp" style="left:1513px;top:538px;width:368px;height:42px"></div>
<div class="t" style="left:1526px;top:551.45px;font-size:14px;color:#2f3542;">6</div>
<div class="t" style="left:359.5px;top:599.35px;font-size:14px;color:#6f757d;letter-spacing:0.3px;-webkit-text-stroke:0.45px #6f757d;">Status</div>
<div class="inp" style="left:359px;top:621px;width:369px;height:42px"></div>
<div class="t" style="left:372px;top:634.45px;font-size:14px;color:#2f3542;">Completed</div>
<div class="t" style="left:744.5px;top:599.35px;font-size:14px;color:#6f757d;letter-spacing:0.3px;-webkit-text-stroke:0.45px #6f757d;">Completion(%)</div>
<div class="inp" style="left:744px;top:621px;width:368px;height:42px"></div>
<div class="t" style="left:757px;top:634.45px;font-size:14px;color:#2f3542;">12</div>
<div class="t" style="left:1128.5px;top:599.35px;font-size:14px;color:#6f757d;letter-spacing:0.3px;-webkit-text-stroke:0.45px #6f757d;">Actual Start Date</div>
<div class="inp" style="left:1128px;top:621px;width:369px;height:42px"></div>
<div class="cal" style="left:1456px;top:621px;width:41px;height:42px"></div>
<div class="t" style="left:1141px;top:634.45px;font-size:14px;color:#2f3542;">11/06/2025</div>
<div class="t" style="left:1513.5px;top:599.35px;font-size:14px;color:#6f757d;letter-spacing:0.3px;-webkit-text-stroke:0.45px #6f757d;">Actual End Date</div>
<div class="inp" style="left:1513px;top:621px;width:368px;height:42px"></div>
<div class="cal" style="left:1840px;top:621px;width:41px;height:42px"></div>
<div class="t" style="left:1526px;top:634.45px;font-size:14px;color:#2f3542;">08/01/2026</div>
<div class="t" style="left:359.6px;top:723.26px;font-size:18px;font-weight:bold;color:#212529;letter-spacing:-0.35px;">Material List</div>
<div class="abs" style="left:359.5px;top:750px;width:1521px;height:43px;background:#e7eef3"></div>
<div class="abs" style="left:359px;top:750px;width:1522px;height:1px;background:#d9e3ea"></div>
<div class="abs" style="left:359px;top:793px;width:1522px;height:1px;background:#d9e3ea"></div>
<div class="abs" style="left:359px;top:852px;width:1522px;height:1px;background:#d9e3ea"></div>
<div class="abs" style="left:359px;top:911px;width:1522px;height:1px;background:#d9e3ea"></div>
<div class="abs" style="left:358.9px;top:750px;width:1px;height:200px;background:#d9e3ea"></div>
<div class="abs" style="left:427.9px;top:750px;width:1px;height:200px;background:#d9e3ea"></div>
<div class="abs" style="left:540.9px;top:750px;width:1px;height:200px;background:#d9e3ea"></div>
<div class="abs" style="left:755.1px;top:750px;width:1px;height:200px;background:#d9e3ea"></div>
<div class="abs" style="left:983.9px;top:750px;width:1px;height:200px;background:#d9e3ea"></div>
<div class="abs" style="left:1073.7px;top:750px;width:1px;height:200px;background:#d9e3ea"></div>
<div class="abs" style="left:1163.1px;top:750px;width:1px;height:200px;background:#d9e3ea"></div>
<div class="abs" style="left:1342.0px;top:750px;width:1px;height:200px;background:#d9e3ea"></div>
<div class="abs" style="left:1479.7px;top:750px;width:1px;height:200px;background:#d9e3ea"></div>
<div class="abs" style="left:1780.1px;top:750px;width:1px;height:200px;background:#d9e3ea"></div>
<div class="abs" style="left:1879.9px;top:750px;width:1px;height:200px;background:#d9e3ea"></div>
<div class="t" style="left:293.9px;width:200px;text-align:center;top:766.34px;font-size:12px;color:#1f2933;-webkit-text-stroke:0.3px #1f2933;transform:scaleX(0.94);transform-origin:50% 0;">SR#</div>
<div class="t" style="left:441.0px;top:766.34px;font-size:12px;color:#1f2933;-webkit-text-stroke:0.3px #1f2933;transform:scaleX(0.94);transform-origin:0 0;">ITEM NO</div>
<div class="t" style="left:554.0px;top:766.34px;font-size:12px;color:#1f2933;-webkit-text-stroke:0.3px #1f2933;transform:scaleX(0.94);transform-origin:0 0;">MATERIAL CATEGORY</div>
<div class="t" style="left:768.2px;top:766.34px;font-size:12px;color:#1f2933;-webkit-text-stroke:0.3px #1f2933;transform:scaleX(0.94);transform-origin:0 0;">ITEM NAME</div>
<div class="t" style="left:997.0px;top:766.34px;font-size:12px;color:#1f2933;-webkit-text-stroke:0.3px #1f2933;transform:scaleX(0.94);transform-origin:0 0;">UOM</div>
<div class="t" style="left:1086.8px;top:766.34px;font-size:12px;color:#1f2933;-webkit-text-stroke:0.3px #1f2933;transform:scaleX(0.94);transform-origin:0 0;">SIZE</div>
<div class="t" style="left:1176.1999999999998px;top:766.34px;font-size:12px;color:#1f2933;-webkit-text-stroke:0.3px #1f2933;transform:scaleX(0.94);transform-origin:0 0;">TOTAL QUANTITY</div>
<div class="t" style="left:1355.1px;top:766.34px;font-size:12px;color:#1f2933;-webkit-text-stroke:0.3px #1f2933;transform:scaleX(0.94);transform-origin:0 0;">TOTAL USED</div>
<div class="t" style="left:1492.8px;top:766.34px;font-size:12px;color:#1f2933;-webkit-text-stroke:0.3px #1f2933;transform:scaleX(0.94);transform-origin:0 0;">CONSUMPTION</div>
<div class="t" style="left:1730.5px;width:200px;text-align:center;top:766.34px;font-size:12px;color:#1f2933;-webkit-text-stroke:0.3px #1f2933;transform:scaleX(0.94);transform-origin:50% 0;">ACTION</div>
<div class="t" style="left:293.9px;width:200px;text-align:center;top:809.45px;font-size:14px;color:#212529;">1</div>
<div class="t" style="left:441.0px;top:809.45px;font-size:14px;color:#212529;">ITM-001</div>
<div class="t" style="left:554.0px;top:809.45px;font-size:14px;color:#212529;">Cement</div>
<div class="t" style="left:768.2px;top:809.45px;font-size:14px;color:#212529;">Cement OPC 43</div>
<div class="t" style="left:997.0px;top:809.45px;font-size:14px;color:#212529;">Bag</div>
<div class="t" style="left:1086.8px;top:809.45px;font-size:14px;color:#212529;">15'x4'</div>
<div class="t" style="left:1176.1999999999998px;top:809.45px;font-size:14px;color:#212529;">50</div>
<div class="t" style="left:1355.1px;top:809.45px;font-size:14px;color:#212529;">36</div>
<div class="inp" style="left:1493px;top:806px;width:275px;height:34px;border-color:#d7dce5"></div>
<div class="t" style="left:1507px;top:815.95px;font-size:14px;color:#a9aeb6;">Enter Consumption</div>
<div class="abs" style="left:1812px;top:806px;width:37px;height:30px;background:#edeef4;border:1px solid #dfe2ee;border-radius:4px"></div>
<div class="t" style="left:293.9px;width:200px;text-align:center;top:868.45px;font-size:14px;color:#212529;">2</div>
<div class="t" style="left:441.0px;top:868.45px;font-size:14px;color:#212529;">ITM-002</div>
<div class="t" style="left:554.0px;top:868.45px;font-size:14px;color:#212529;">Structural</div>
<div class="t" style="left:768.2px;top:868.45px;font-size:14px;color:#212529;">TMT Steel Bar 16mm</div>
<div class="t" style="left:997.0px;top:868.45px;font-size:14px;color:#212529;">Ton</div>
<div class="t" style="left:1086.8px;top:868.45px;font-size:14px;color:#212529;">7'x3'</div>
<div class="t" style="left:1176.1999999999998px;top:868.45px;font-size:14px;color:#212529;">55</div>
<div class="t" style="left:1355.1px;top:868.45px;font-size:14px;color:#212529;">43</div>
<div class="inp" style="left:1493px;top:865px;width:275px;height:34px;border-color:#d7dce5"></div>
<div class="t" style="left:1507px;top:874.95px;font-size:14px;color:#a9aeb6;">Enter Consumption</div>
<div class="abs" style="left:1812px;top:865px;width:37px;height:30px;background:#edeef4;border:1px solid #dfe2ee;border-radius:4px"></div>
<svg style="left:0;top:0" width="1920" height="919" fill="none"><rect x="701.3000000000001" y="219.89999999999998" width="11.4" height="12" rx="1" fill="none" stroke="#3b4a66" stroke-width="1.4"/><rect x="700.6" y="219.2" width="12.8" height="3.2" fill="#3b4a66"/><rect x="703.2" y="217.2" width="1.3" height="2.5" fill="#3b4a66"/><rect x="709.6" y="217.2" width="1.3" height="2.5" fill="#3b4a66"/><rect x="707.6" y="227.2" width="3.4" height="3.4" fill="#3b4a66"/><path d="M1061.5 219.5 L1071.5 229.5 M1071.5 219.5 L1061.5 229.5" stroke="#70757d" stroke-width="1.7"/><path d="M1086 221.9 L1091 226.9 L1096 221.9" stroke="#2d333b" stroke-width="1.7" stroke-linecap="round" stroke-linejoin="round"/><path d="M677.5 471.5 L687.5 481.5 M687.5 471.5 L677.5 481.5" stroke="#70757d" stroke-width="1.7"/><path d="M702 473.9 L707 478.9 L712 473.9" stroke="#2d333b" stroke-width="1.7" stroke-linecap="round" stroke-linejoin="round"/><path d="M1061.5 471.5 L1071.5 481.5 M1071.5 471.5 L1061.5 481.5" stroke="#70757d" stroke-width="1.7"/><path d="M1086 473.9 L1091 478.9 L1096 473.9" stroke="#2d333b" stroke-width="1.7" stroke-linecap="round" stroke-linejoin="round"/><path d="M1446.5 471.5 L1456.5 481.5 M1456.5 471.5 L1446.5 481.5" stroke="#70757d" stroke-width="1.7"/><path d="M1471 473.9 L1476 478.9 L1481 473.9" stroke="#2d333b" stroke-width="1.7" stroke-linecap="round" stroke-linejoin="round"/><path d="M1830.5 471.5 L1840.5 481.5 M1840.5 471.5 L1830.5 481.5" stroke="#70757d" stroke-width="1.7"/><path d="M1855 473.9 L1860 478.9 L1865 473.9" stroke="#2d333b" stroke-width="1.7" stroke-linecap="round" stroke-linejoin="round"/><path d="M677.5 553.5 L687.5 563.5 M687.5 553.5 L677.5 563.5" stroke="#70757d" stroke-width="1.7"/><path d="M702 555.9 L707 560.9 L712 555.9" stroke="#2d333b" stroke-width="1.7" stroke-linecap="round" stroke-linejoin="round"/><path d="M1061.5 553.5 L1071.5 563.5 M1071.5 553.5 L1061.5 563.5" stroke="#70757d" stroke-width="1.7"/><path d="M1086 555.9 L1091 560.9 L1096 555.9" stroke="#2d333b" stroke-width="1.7" stroke-linecap="round" stroke-linejoin="round"/><path d="M1446.5 553.5 L1456.5 563.5 M1456.5 553.5 L1446.5 563.5" stroke="#70757d" stroke-width="1.7"/><path d="M1471 555.9 L1476 560.9 L1481 555.9" stroke="#2d333b" stroke-width="1.7" stroke-linecap="round" stroke-linejoin="round"/><path d="M677.5 636.5 L687.5 646.5 M687.5 636.5 L677.5 646.5" stroke="#70757d" stroke-width="1.7"/><path d="M702 638.9 L707 643.9 L712 638.9" stroke="#2d333b" stroke-width="1.7" stroke-linecap="round" stroke-linejoin="round"/><rect x="1470.3" y="636.9000000000001" width="11.4" height="12" rx="1" fill="none" stroke="#3b4a66" stroke-width="1.4"/><rect x="1469.6" y="636.2" width="12.8" height="3.2" fill="#3b4a66"/><rect x="1472.1999999999998" y="634.2" width="1.3" height="2.5" fill="#3b4a66"/><rect x="1478.6" y="634.2" width="1.3" height="2.5" fill="#3b4a66"/><rect x="1476.6" y="644.2" width="3.4" height="3.4" fill="#3b4a66"/><rect x="1854.3" y="636.9000000000001" width="11.4" height="12" rx="1" fill="none" stroke="#3b4a66" stroke-width="1.4"/><rect x="1853.6" y="636.2" width="12.8" height="3.2" fill="#3b4a66"/><rect x="1856.1999999999998" y="634.2" width="1.3" height="2.5" fill="#3b4a66"/><rect x="1862.6" y="634.2" width="1.3" height="2.5" fill="#3b4a66"/><rect x="1860.6" y="644.2" width="3.4" height="3.4" fill="#3b4a66"/><path d="M1825.8 815.6 H1835.2 M1829.2 815.2 V814.3 H1831.8 V815.2 M1826.7 815.8 L1827.4 824.6 H1833.6 L1834.3 815.8" fill="none" stroke="#1d2330" stroke-width="1.1"/><rect x="1829.6" y="817.6" width="1.8" height="5.2" fill="#45405a"/><path d="M1825.8 874.6 H1835.2 M1829.2 874.2 V873.3 H1831.8 V874.2 M1826.7 874.8 L1827.4 883.6 H1833.6 L1834.3 874.8" fill="none" stroke="#1d2330" stroke-width="1.1"/><rect x="1829.6" y="876.6" width="1.8" height="5.2" fill="#45405a"/></svg>
<div class="abs" style="left:1914px;top:879px;width:6px;height:40px;background:#fff"></div>
</body></html>
